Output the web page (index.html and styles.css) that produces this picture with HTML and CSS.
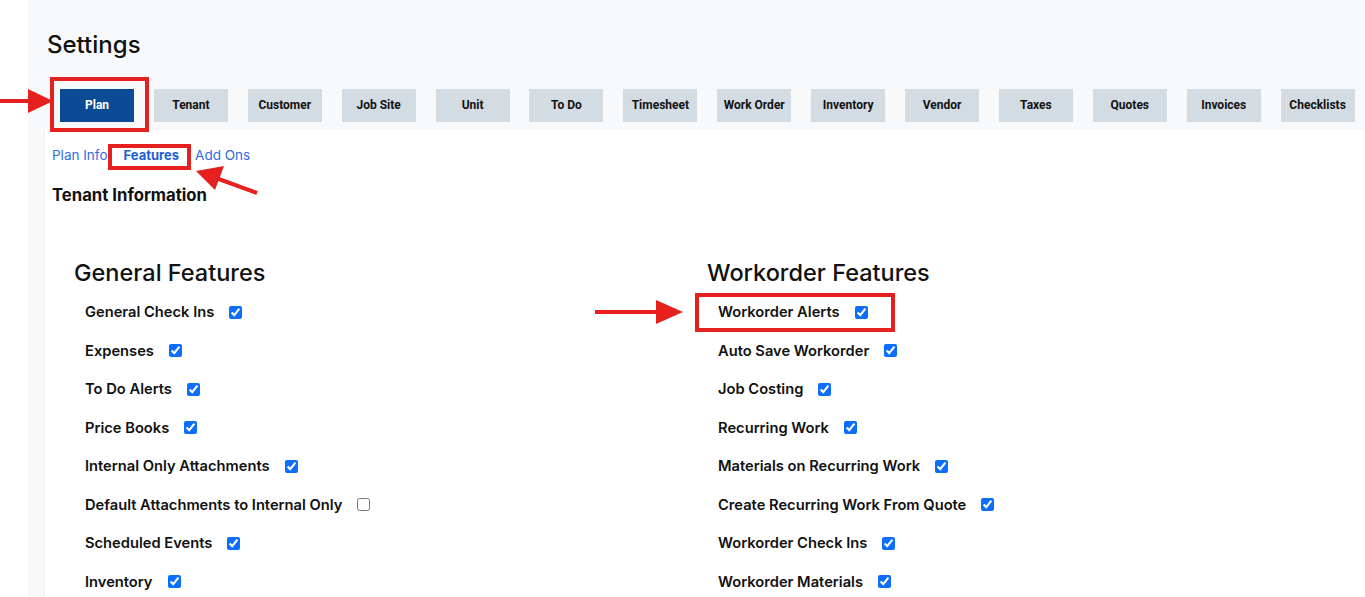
FILE: index.html
```html
<!DOCTYPE html>
<html lang="en">
<head>
<meta charset="utf-8">
<title>Settings</title>
<link rel="stylesheet" href="styles.css">
</head>
<body>
<div class="app">
  <aside class="rail"></aside>
  <main class="main">
    <h1 class="page-title">Settings</h1>
    <nav class="tabs">
      <button class="tab active">Plan</button>
      <button class="tab">Tenant</button>
      <button class="tab">Customer</button>
      <button class="tab">Job Site</button>
      <button class="tab">Unit</button>
      <button class="tab">To Do</button>
      <button class="tab">Timesheet</button>
      <button class="tab">Work Order</button>
      <button class="tab">Inventory</button>
      <button class="tab">Vendor</button>
      <button class="tab">Taxes</button>
      <button class="tab">Quotes</button>
      <button class="tab">Invoices</button>
      <button class="tab">Checklists</button>
    </nav>
    <section class="panel">
      <div class="subtabs">
        <a class="subtab">Plan Info</a>
        <a class="subtab current">Features</a>
        <a class="subtab">Add Ons</a>
      </div>
      <h2 class="section-title">Tenant Information</h2>
      <div class="features">
        <div class="feature-col">
          <h3 class="group-title">General Features</h3>
          <ul class="feature-list">
            <li class="feature"><span>General Check Ins</span><input type="checkbox" checked></li>
            <li class="feature"><span>Expenses</span><input type="checkbox" checked></li>
            <li class="feature"><span>To Do Alerts</span><input type="checkbox" checked></li>
            <li class="feature"><span>Price Books</span><input type="checkbox" checked></li>
            <li class="feature"><span>Internal Only Attachments</span><input type="checkbox" checked></li>
            <li class="feature"><span>Default Attachments to Internal Only</span><input type="checkbox"></li>
            <li class="feature"><span>Scheduled Events</span><input type="checkbox" checked></li>
            <li class="feature"><span>Inventory</span><input type="checkbox" checked></li>
          </ul>
        </div>
        <div class="feature-col">
          <h3 class="group-title">Workorder Features</h3>
          <ul class="feature-list">
            <li class="feature"><span>Workorder Alerts</span><input type="checkbox" checked></li>
            <li class="feature"><span>Auto Save Workorder</span><input type="checkbox" checked></li>
            <li class="feature"><span>Job Costing</span><input type="checkbox" checked></li>
            <li class="feature"><span>Recurring Work</span><input type="checkbox" checked></li>
            <li class="feature"><span>Materials on Recurring Work</span><input type="checkbox" checked></li>
            <li class="feature"><span>Create Recurring Work From Quote</span><input type="checkbox" checked></li>
            <li class="feature"><span>Workorder Check Ins</span><input type="checkbox" checked></li>
            <li class="feature"><span>Workorder Materials</span><input type="checkbox" checked></li>
          </ul>
        </div>
      </div>
    </section>
  </main>

  <!-- callout marks drawn over the page -->
  <svg class="callouts" width="1365" height="597" viewBox="0 0 1365 597">
    <g fill="none" stroke="#e5201f" stroke-width="4">
      <rect x="52" y="79" width="95" height="51"/>
      <rect x="110" y="146" width="79" height="22"/>
      <rect x="697" y="295" width="196" height="35"/>
    </g>
    <g fill="#e5201f" stroke="#e5201f">
      <line x1="0" y1="101" x2="30" y2="101" stroke-width="4"/>
      <polygon points="28,89 53,101 28,113" stroke="none"/>
      <line x1="257" y1="193" x2="216" y2="178" stroke-width="4"/>
      <polygon points="196,171 224,166 215,190" stroke="none"/>
      <line x1="595" y1="312" x2="660" y2="312" stroke-width="4"/>
      <polygon points="656,300 683,312 656,324" stroke="none"/>
    </g>
  </svg>
</div>
</body>
</html>
```

FILE: styles.css
```css
* {
  box-sizing: border-box;
}

html, body {
  margin: 0;
  padding: 0;
  height: 100%;
  overflow: hidden;
  background: #ffffff;
  font-family: Inter, "Open Sans", "Noto Sans", sans-serif;
  color: #111111;
}

.app {
  position: relative;
  display: flex;
  min-height: 100%;
}

.rail {
  width: 28px;
  flex: 0 0 28px;
  background: #ffffff;
}

.main {
  flex: 1;
  min-width: 0;
  background: #f8f9fb;
  padding: 29px 0 0 17px;
}

.page-title {
  margin: 0 0 0 2px;
  font-size: 24px;
  line-height: 32px;
  font-weight: 500;
  color: #111111;
}

.tabs {
  display: flex;
  gap: 19.9px;
  margin: 28px 0 0 15px;
}

.tab {
  flex: 0 0 74px;
  width: 74px;
  height: 33px;
  border: 0;
  border-radius: 0;
  padding: 0;
  background: #d4dce3;
  color: #111111;
  font-family: Roboto, "Liberation Sans", sans-serif;
  font-weight: 700;
  font-size: 12px;
  line-height: 31px;
  cursor: pointer;
}

.tab.active {
  background: #0b4a94;
  color: #ffffff;
}

.panel {
  margin-top: 8px;
  background: #ffffff;
  min-height: 480px;
  padding: 16px 0 0 7px;
  box-shadow: -1px 0 2px rgba(0, 0, 0, 0.04);
}

.subtabs {
  display: flex;
  gap: 16px;
  font-size: 13.5px;
  line-height: 18px;
}

.subtab {
  color: #2f6de1;
  text-decoration: none;
}

.subtab.current {
  font-weight: 700;
  font-size: 13px;
  color: #1f5fd6;
}

.section-title {
  margin: 20px 0 0;
  font-size: 16.7px;
  line-height: 22px;
  font-weight: 700;
}

.features {
  display: grid;
  grid-template-columns: 633px 1fr;
  margin-top: 52px;
  padding-left: 22px;
}

.group-title {
  margin: 0;
  font-size: 23.5px;
  line-height: 30px;
  font-weight: 500;
}

.feature-list {
  list-style: none;
  margin: 5px 0 0;
  padding: 0 0 0 11px;
}

.feature {
  display: flex;
  align-items: center;
  gap: 15px;
  height: 38.5px;
  font-size: 14.7px;
  font-weight: 600;
}

.feature input {
  width: 13px;
  height: 13px;
  margin: 0;
  accent-color: #0d6efd;
}

.callouts {
  position: absolute;
  top: 0;
  left: 0;
  pointer-events: none;
}
```
